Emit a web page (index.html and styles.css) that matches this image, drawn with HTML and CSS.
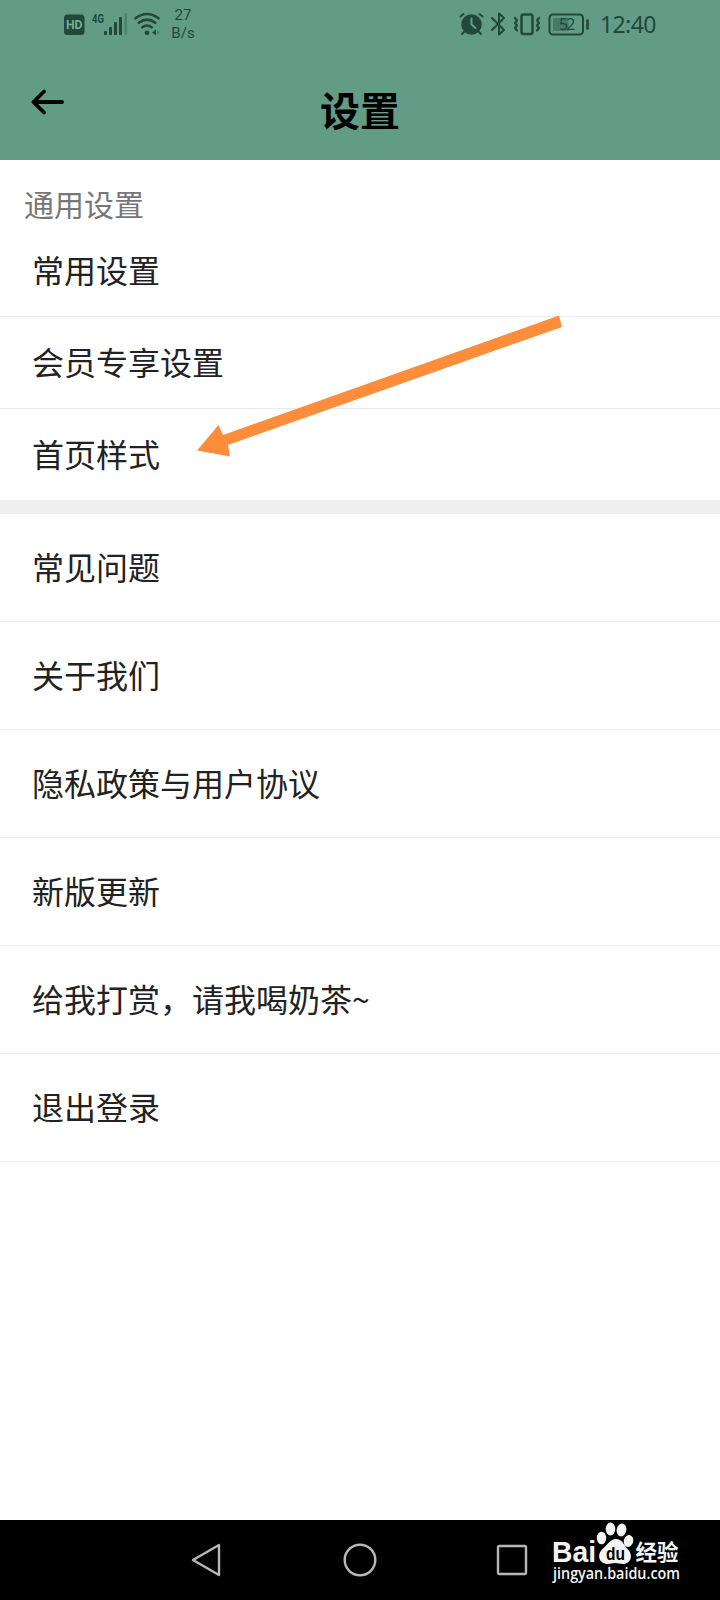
FILE: index.html
```
<!DOCTYPE html>
<html lang="zh-CN">
<head>
<meta charset="utf-8">
<title>设置</title>
<link rel="stylesheet" href="styles.css">
</head>

<body>
<div class="screen">
    <header class="top">
        <div class="status">
            <!-- hd, signal, wifi -->
            <svg class="left-icons" width="100" height="50" viewBox="60 0 100 50">
                <rect x="64" y="14.5" width="20.5" height="20.5" rx="3.5" fill="#21483b"/>
                <text class="hd" x="66" y="29.3" textLength="16.5" lengthAdjust="spacingAndGlyphs">HD</text>
                <text class="net" x="92" y="22.5" textLength="12" lengthAdjust="spacingAndGlyphs">4G</text>
                <g fill="#21483b">
                    <rect x="104" y="31" width="3" height="4" rx="1"/>
                    <rect x="109" y="27" width="3" height="8" rx="1"/>
                    <rect x="114" y="22" width="3" height="13" rx="1"/>
                    <rect x="119" y="17" width="3" height="18" rx="1"/>
                    <rect x="124.5" y="13" width="2.5" height="22" rx="1" opacity=".3"/>
                    <circle cx="147" cy="32.8" r="2.4"/>
                    <path d="M152 32.5l4-3v6z"/>
                    <path d="M157 30l3 2.5-3 2.5z" opacity=".3"/>
                </g>
                <g fill="none" stroke="#21483b" stroke-width="2.6" stroke-linecap="round">
                    <path d="M135.5 18.3Q147 9.7 158.5 18.3"/>
                    <path d="M138.8 22.8Q147 16.5 155.2 22.8"/>
                    <path d="M142.3 27.3Q147 23.7 151.7 27.3"/>
                </g>
            </svg>
            <div class="speed"><span>27</span><span>B/s</span></div>
            <!-- alarm, bluetooth, vibrate, battery -->
            <svg class="right-icons" width="134" height="50" viewBox="456 0 134 50">
                <g fill="none" stroke="#21483b" stroke-width="2" stroke-linecap="round" stroke-linejoin="round">
                    <circle cx="471.5" cy="24.5" r="9.3" fill="#21483b"/>
                    <path d="M460.5 16.5l3-2.5M482.5 16.5l-3-2.5M464.5 31.5l-2.5 2.5M478.5 31.5l2.5 2.5"/>
                    <path d="M471.5 18.5v6l4 3.5" stroke="#629c87"/>
                    <path d="M492 18l12 12-5 4.5V13.5l5 4.5-12 12"/>
                    <rect x="521.5" y="14.5" width="11" height="19.5" rx="2" stroke-width="2.4"/>
                    <path d="M515 18l2 2.5-2 2.5 2 2.5-2 2.5 2 2.5M539 18l-2 2.5 2 2.5-2 2.5 2 2.5-2 2.5" stroke-width="2.2"/>
                    <rect x="549.5" y="14.5" width="33.5" height="20" rx="3.5"/>
                    <path d="M587.5 20.5v8" stroke-width="2.6"/>
                </g>
                <rect x="553" y="18" width="15.5" height="13" fill="#21483b" opacity=".4"/>
                <text class="battery" x="559" y="30" textLength="16.5">52</text>
            </svg>
            <span class="clock">12:40</span>
        </div>
        <div class="bar">
            <svg class="back" width="34" height="28" viewBox="0 0 34 28">
                <path d="M31 14H3M13 3.500L2.5 14 13 24.5" fill="none" stroke="#000" stroke-width="3.8" stroke-linecap="round" stroke-linejoin="round"/>
            </svg>
            <h1 class="title">设置</h1>
        </div>
    </header>

    <main>
        <h2 class="label">通用设置</h2>
        <ul class="list general">
            <li>常用设置</li>
            <li>会员专享设置</li>
            <li>首页样式</li>
        </ul>
        <ul class="list more">
            <li>常见问题</li>
            <li>关于我们</li>
            <li>隐私政策与用户协议</li>
            <li>新版更新</li>
            <li>给我打赏，请我喝奶茶~</li>
            <li>退出登录</li>
        </ul>
    </main>

    <nav class="nav">
        <svg width="32" height="36" viewBox="0 0 32 36"><path d="M28 3v30L2 18z"/></svg>
        <svg width="36" height="36" viewBox="0 0 36 36"><circle cx="18" cy="18" r="15.3"/></svg>
        <svg width="32" height="32" viewBox="0 0 32 32"><rect x="2" y="2" width="28" height="28" rx="1.5"/></svg>
    </nav>

    <svg class="pointer" width="370" height="146" viewBox="195 313 370 146">
        <path d="M197 450.500L218.500 425l4.500 10L559 315.500l3 11.500L228 445l2 11.500z" fill="#fd8d3b"/>
    </svg>

    <svg class="watermark" width="136" height="66" viewBox="548 1520 136 66">
        <text class="brand" x="552" y="1562" textLength="44" lengthAdjust="spacingAndGlyphs">Bai</text>
        <g fill="#f4f4f4">
            <ellipse cx="601.5" cy="1538" rx="4.7" ry="6.3"/>
            <ellipse cx="610.5" cy="1529" rx="4.8" ry="6.5"/>
            <ellipse cx="621.5" cy="1530" rx="4.8" ry="6.5" transform="rotate(12 621.5 1530)"/>
            <ellipse cx="628.5" cy="1541" rx="4.7" ry="6" transform="rotate(15 628.5 1541)"/>
            <path d="M616 1539c6 0 8 6 11 9.500 7 6 4 15.500-4 15.500-3 0-5-1-8-1s-5 1-7 1c-9 0-12-9.500-5-15.500 5-4 7-9.500 13-9.500z"/>
        </g>
        <text class="du" x="606" y="1560" textLength="19" lengthAdjust="spacingAndGlyphs">du</text>
        <text class="exp" x="635.5" y="1560" textLength="43" lengthAdjust="spacingAndGlyphs">经验</text>
        <text class="url" x="553" y="1578.5" textLength="127" lengthAdjust="spacingAndGlyphs">jingyan.baidu.com</text>
    </svg>
</div>
</body>
</html>
```
FILE: styles.css
```
* {
    box-sizing: border-box;
    margin: 0;
    padding: 0;
}
body {
    background-color: white;
    font-family: KaiTi, "Noto Sans CJK SC", sans-serif;
    color: #222;
}
.screen {
    position: relative;
    display: flex;
    flex-direction: column;
    width: 720px;
    height: 1600px;
    overflow: hidden;
}
.top {
    height: 160px;
    background-color: #629c87;
}
.status {
    display: flex;
    height: 50px;
    padding-left: 60px;
    color: #21483b;
    font-family: Roboto, sans-serif;
}
.hd {
    font: bold 13px Roboto, sans-serif;
    fill: #78ad98;
}
.net {
    font: bold 12px Roboto, sans-serif;
    fill: #21483b;
}
.speed {
    display: flex;
    flex-direction: column;
    align-items: center;
    width: 46px;
    padding-top: 6px;
    font-size: 15px;
    line-height: 18px;
}
.right-icons {
    margin-left: 250px;
}
.battery {
    font: 16px "Open Sans", sans-serif;
    fill: #21483b;
}
.clock {
    margin-left: 10px;
    font: 23px/48px "Noto Sans", sans-serif;
    letter-spacing: -0.6px;
}
.bar {
    display: grid;
    grid-template-columns: 100px 1fr 100px;
    height: 110px;
    color: black;
}
.back {
    margin: 38px 0 0 31px;
}
.title {
    padding-top: 29px;
    font-size: 40px;
    line-height: 60px;
    text-align: center;
}
main {
    flex: 1;
}
.label {
    height: 65px;
    padding: 23px 24px 0;
    font-size: 30px;
    font-weight: normal;
    line-height: 40px;
    color: #777;
}
.list {
    list-style: none;
    font-size: 32px;
}
.list li {
    display: flex;
    align-items: center;
    height: 108px;
    padding: 0 0 4px 32px;
    border-bottom: 1px solid #ebebeb;
}
.general {
    border-bottom: 14px solid #efefef;
}
.list.general li {
    height: 92px;
}
.list.general li:last-child {
    height: 91px;
    border-bottom: none;
}
.nav {
    display: flex;
    align-items: center;
    height: 80px;
    padding-left: 191px;
    gap: 118px;
    background-color: black;
    fill: none;
    stroke: #b8b8b8;
    stroke-width: 2.4;
    stroke-linejoin: round;
}
.nav svg:first-child {
    margin-right: 1px;
}
.pointer {
    position: absolute;
    left: 195px;
    top: 313px;
}
.watermark {
    position: absolute;
    left: 548px;
    top: 1520px;
}
.brand {
    font: bold 29px "Liberation Sans", sans-serif;
    fill: #f4f4f4;
}
.du {
    font: bold 18px "Liberation Sans", sans-serif;
    fill: black;
}
.exp {
    font: bold 22px "Noto Sans CJK SC", sans-serif;
    fill: #f4f4f4;
}
.url {
    font: 600 16px "Open Sans", sans-serif;
    fill: #f4f4f4;
}
```
